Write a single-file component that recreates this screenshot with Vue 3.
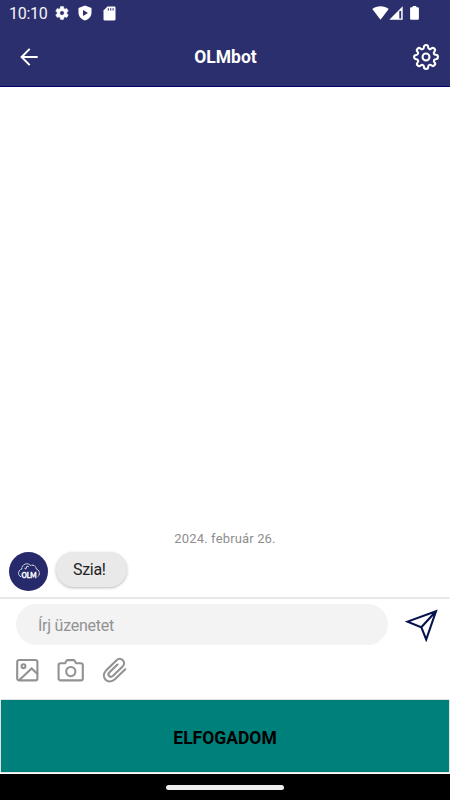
<template>
  <div class="screen">
    <header class="top">
      <div class="status">
        <span class="clock">10:10</span>
        <svg class="status-gear" width="16" height="16" viewBox="0 0 24 24" fill="#fff" stroke="#fff" stroke-width=".8">
          <path d="M19.140 12.940a7 7 0 0 0 .06-.94 7 7 0 0 0-.07-.94l2.030-1.580a.5.5 0 0 0 .12-.61l-1.920-3.320a.49.49 0 0 0-.59-.22l-2.390.96a7 7 0 0 0-1.620-.94l-.36-2.540A.48.48 0 0 0 13.920 2.400h-3.840a.47.47 0 0 0-.47.41l-.36 2.540a7.300 7.300 0 0 0-1.620.94l-2.390-.96a.48.48 0 0 0-.59.22L2.740 8.870a.47.47 0 0 0 .12.61l2.030 1.580a7 7 0 0 0 0 1.880l-2.030 1.580a.5.5 0 0 0-.12.61l1.920 3.320c.12.22.37.29.59.22l2.390-.96c.5.38 1.030.7 1.620.94l.36 2.540c.05.24.24.41.48.41h3.840c.24 0 .44-.17.47-.41l.36-2.540a7.300 7.300 0 0 0 1.620-.94l2.390.96c.22.08.47 0 .59-.22l1.920-3.320a.47.47 0 0 0-.12-.61zM12 15.400a3.400 3.400 0 1 1 0-6.800 3.400 3.400 0 0 1 0 6.800z" />
        </svg>
        <svg class="status-shield" width="14" height="16" viewBox="0 0 14 16">
          <path d="M7 .4 13.500 2.900v4.900c0 3.600-2.600 6.500-6.500 7.800C3.100 14.300.5 11.400.5 7.800V2.900z" fill="#fff" />
          <path d="M5 5v6l5-3z" fill="#2c2f6e" />
        </svg>
        <svg class="status-card" width="13" height="15" viewBox="0 0 13 15">
          <path d="M4.500.5h6.800c.7 0 1.200.5 1.200 1.200v11.600c0 .7-.5 1.200-1.200 1.200H1.700c-.7 0-1.200-.5-1.200-1.200V4.500z" fill="#fff" />
          <path d="M5.300 2.300v2.300M7.700 2.300v2.300M10.100 2.300v2.300" stroke="#2c2f6e" stroke-width="1.100" />
        </svg>
        <div class="status-right">
          <svg width="17" height="14" viewBox="0 0 17 14">
            <path d="M.3 3.100C4.800-.7 12.200-.7 16.700 3.100L8.500 13.700z" fill="#fff" />
          </svg>
          <svg width="14" height="14" viewBox="0 0 14 14">
            <path d="M13.700.3v13.400H.3z" fill="#fff" />
            <path d="M10.300 5h1.900v7.500h-1.900z" fill="#2c2f6e" />
          </svg>
          <svg class="battery" width="9" height="14" viewBox="0 0 9 14">
            <path d="M2.700 0h3.600v1.300H8c.5 0 .9.4.9.9v10.600c0 .5-.4.900-.9.900H1c-.5 0-.9-.4-.9-.9V2.200c0-.5.4-.9.9-.9h1.700z" fill="#fff" />
          </svg>
        </div>
      </div>
      <div class="bar">
        <button class="icon-btn" aria-label="Vissza">
          <svg width="18" height="18" viewBox="0 0 18 18" fill="none" stroke="#fff" stroke-width="2">
            <path d="M17.700 9H1.500M9.700.900 1.600 9l8.100 8.100" />
          </svg>
        </button>
        <h1 class="title">OLMbot</h1>
        <button class="icon-btn" aria-label="Beállítások">
          <svg width="26" height="26" viewBox="0 0 24 24" fill="none" stroke="#fff" stroke-width="1.900" stroke-linecap="round" stroke-linejoin="round">
            <circle cx="12" cy="12" r="3.200" />
            <path d="M19.400 15a1.650 1.650 0 0 0 .33 1.820l.06.06a2 2 0 0 1-2.830 2.830l-.06-.06a1.650 1.650 0 0 0-1.820-.33 1.650 1.650 0 0 0-1 1.510V21a2 2 0 0 1-4 0v-.09A1.650 1.650 0 0 0 9 19.400a1.650 1.650 0 0 0-1.820.33l-.06.06a2 2 0 0 1-2.830-2.830l.06-.06a1.650 1.650 0 0 0 .33-1.820 1.650 1.650 0 0 0-1.510-1H3a2 2 0 0 1 0-4h.09A1.650 1.650 0 0 0 4.600 9a1.650 1.650 0 0 0-.33-1.820l-.06-.06a2 2 0 0 1 2.830-2.830l.06.06a1.650 1.650 0 0 0 1.820.33H9a1.650 1.650 0 0 0 1-1.510V3a2 2 0 0 1 4 0v.09a1.650 1.650 0 0 0 1 1.510 1.650 1.650 0 0 0 1.820-.33l.06-.06a2 2 0 0 1 2.830 2.830l-.06.06a1.650 1.650 0 0 0-.33 1.820V9a1.650 1.650 0 0 0 1.510 1H21a2 2 0 0 1 0 4h-.09a1.650 1.650 0 0 0-1.510 1z" />
          </svg>
        </button>
      </div>
    </header>

    <main class="chat">
      <p class="date">2024. február 26.</p>
      <div v-for="msg in messages" :key="msg.id" class="message">
        <div class="avatar">
          <svg width="39" height="39" viewBox="0 0 40 40">
            <path d="M12.300 25.400c-3.500-1.200-3.400-6.800.7-7.800 0-4.800 5.800-7.500 9-3.800 3.300-1.100 6 1 6 3.600 3.700 1.200 4 6 1.600 7.800" fill="none" stroke="#fff" stroke-width=".9" stroke-dasharray="2.600 .4" />
            <path d="M15.800 16.500l1.400 1 1.200-3 1.800.6" fill="none" stroke="#fff" stroke-width=".9" />
            <text x="20.500" y="26.300" text-anchor="middle" textLength="15.500" lengthAdjust="spacingAndGlyphs" class="avatar-text">OLM</text>
          </svg>
        </div>
        <div class="bubble">{{ msg.text }}</div>
      </div>
    </main>

    <section class="composer">
      <div class="compose-row">
        <input v-model="draft" class="field" type="text" placeholder="Írj üzenetet" />
        <button class="send" aria-label="Küldés">
          <svg width="34" height="34" viewBox="0 0 34 34" fill="none" stroke="#06134c" stroke-width="2.100" stroke-linejoin="miter">
            <path d="M31 3.300 2.600 13.600l13.700 5.600L21.200 31.500zM31 3.300 16.300 19.200" />
          </svg>
        </button>
      </div>
      <div class="tools">
        <svg width="23" height="24" viewBox="0 0 23 24" fill="none" stroke="#929292" stroke-width="2.100">
          <rect x="1.200" y="2" width="20.200" height="20.400" rx="2" />
          <circle cx="7.500" cy="8.200" r="1.900" />
          <path d="M3 22.200 15.700 10.500l6 5.800" />
        </svg>
        <svg width="27" height="24" viewBox="0 0 27 24" fill="none" stroke="#929292" stroke-width="2.100">
          <path d="M3.600 5.300h4.500l1.400-2.500c.3-.5.700-.7 1.200-.7h5.800c.5 0 .9.200 1.200.7l1.400 2.500h4.700c1.100 0 2 .9 2 2v13.100c0 1.100-.9 2-2 2H3.600c-1.100 0-2-.9-2-2V7.300c0-1.100.9-2 2-2z" />
          <circle cx="13.800" cy="13.600" r="4.600" />
        </svg>
        <svg width="26" height="26" viewBox="0 0 26 26" fill="none" stroke="#929292" stroke-width="2.100" stroke-linecap="round">
          <path d="M23.300 12.300 12.900 22.300c-6.900 6.100-14.900-2.200-8.900-8.700L14.300 3.400c4.700-4.300 10.500 1.700 6.300 6.200L10.800 19c-2.800 2.300-5.800-.9-3.500-3.500l8.200-8" />
        </svg>
      </div>
    </section>

    <button class="accept">ELFOGADOM</button>

    <footer class="nav"><span class="handle" /></footer>
  </div>
</template>

<script setup>
import { ref } from 'vue'

const draft = ref('')

const messages = [
  { id: 1, text: 'Szia!' }
]
</script>

<style>
body { background: #fff; }
</style>

<style scoped>
.screen {
  display: flex;
  flex-direction: column;
  width: 450px;
  height: 800px;
  overflow: hidden;
  background: #fff;
  font-family: Roboto, "Liberation Sans", sans-serif;
}
button {
  padding: 0;
  border: 0;
  background: none;
  font-family: inherit;
}
svg { display: block; flex: none; }

.top {
  box-sizing: border-box;
  height: 87px;
  flex: none;
  background: #2c2f6e;
  border-bottom: 1px solid #03036b;
}
.status {
  display: flex;
  align-items: center;
  height: 26px;
  padding: 0 31px 0 9px;
}
.clock {
  width: 39px;
  color: #f4f4f8;
  font-size: 16px;
  line-height: 26px;
  letter-spacing: -0.3px;
  padding-top: 2px;
}
.status-gear { margin-left: 6px; }
.status-shield { margin-left: 8px; }
.status-card { margin-left: 11px; }
.status-right {
  display: flex;
  margin-left: auto;
}
.battery { margin-left: 7px; }

.bar {
  display: flex;
  align-items: center;
  justify-content: space-between;
  height: 62px;
  padding: 0 11px 0 20px;
}
.icon-btn { flex: none; width: 26px; }
.title {
  margin: 1px 8px 0 0;
  color: #fff;
  font-size: 17.5px;
  font-weight: 700;
  line-height: 25px;
}

.chat {
  display: flex;
  flex: 1;
  flex-direction: column;
  justify-content: flex-end;
  padding-bottom: 6px;
}
.date {
  margin: 0 0 4px;
  color: #8e8e8e;
  font-size: 13px;
  line-height: 18px;
  letter-spacing: 0.15px;
  text-align: center;
}
.message {
  display: flex;
  align-items: flex-start;
  padding-left: 9px;
}
.avatar {
  width: 39px;
  height: 39px;
  border-radius: 50%;
  background: #262a6b;
}
.avatar-text {
  fill: #fff;
  stroke: #fff;
  stroke-width: 0.3px;
  font-family: Lato, sans-serif;
  font-size: 7px;
  font-weight: 900;
}
.bubble {
  margin-left: 8px;
  padding: 1px 21px 0 17px;
  border-radius: 18px;
  background: #e9e9e9;
  box-shadow: 0 1px 3px rgba(0, 0, 0, 0.28);
  color: #222;
  font-size: 16px;
  line-height: 34px;
  letter-spacing: -0.3px;
}

.composer {
  box-sizing: border-box;
  height: 103px;
  flex: none;
  border-top: 2px solid #e8e8e8;
  padding: 5px 11px 0 16px;
}
.compose-row {
  display: flex;
  align-items: center;
  justify-content: space-between;
}
.field {
  box-sizing: border-box;
  width: 372px;
  height: 41px;
  padding: 1px 22px 0;
  border: 0;
  border-radius: 21px;
  outline: 0;
  background: #f3f3f3;
  font-family: inherit;
  font-size: 16px;
  letter-spacing: -0.25px;
}
.field::placeholder { color: #929292; opacity: 1; }
.tools {
  display: flex;
  align-items: center;
  gap: 18px;
  margin-top: 12px;
}

.accept {
  box-sizing: border-box;
  height: 72px;
  flex: none;
  margin: 0 1px 2px;
  padding-top: 4px;
  background: #00807b;
  box-shadow: 0 0 1px rgba(0, 0, 0, 0.7);
  color: #000;
  font-size: 17.5px;
  font-weight: 700;
}
.nav {
  display: flex;
  align-items: center;
  justify-content: center;
  height: 26px;
  flex: none;
  background: #000;
}
.handle {
  width: 118px;
  height: 5px;
  border-radius: 3px;
  background: #eee;
}
</style>
